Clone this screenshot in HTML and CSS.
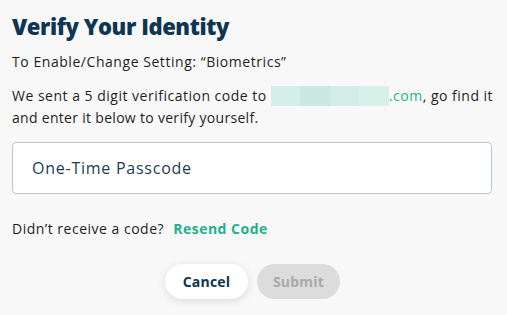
FILE: index.html
```html
<!DOCTYPE html>
<html>
<head>
<meta charset="utf-8">
<link rel="stylesheet" href="styles.css">
</head>
<body>
<div class="dialog">
  <h1 class="title">Verify Your Identity</h1>
  <p class="setting">To Enable/Change Setting: “Biometrics”</p>
  <p class="msg"><span class="line">We sent a 5 digit verification code to <span class="blur"><i class="b1"></i><i class="b2"></i><i class="b3"></i><i class="b4"></i></span><span class="teal">.com</span>, go find it</span><br><span class="line2">and enter it below to verify yourself.</span></p>
  <div class="field"><span class="placeholder">One-Time Passcode</span></div>
  <p class="resend">Didn’t receive a code? <a class="resend-link">Resend Code</a></p>
  <div class="actions">
    <button class="btn cancel">Cancel</button>
    <button class="btn submit">Submit</button>
  </div>
</div>
</body>
</html>
```
FILE: styles.css
```css
html, body { margin: 0; padding: 0; }
body {
  background: #f8f8f8;
  font-family: "Open Sans", "DejaVu Sans", sans-serif;
  color: #1f1f1f;
  width: 507px;
  height: 315px;
  overflow: hidden;
}
.dialog { padding: 12px 15px 0 12px; }
.title {
  margin: 0;
  font-size: 22px;
  font-weight: 800;
  color: #0e3551;
  line-height: 28px;
  letter-spacing: -0.4px;
}
.setting {
  margin: 12px 0 0;
  font-size: 14px;
  line-height: 20px;
  letter-spacing: 0.55px;
}
.msg {
  margin: 13px 0 0;
  font-size: 14px;
  line-height: 22px;
  letter-spacing: 0.5px;
}
.line { white-space: nowrap; }
.line2 { letter-spacing: 0.3px; }
.blur {
  display: inline-flex;
  vertical-align: -5px;
  width: 118px;
  height: 20px;
}
.blur i { flex: 1; display: block; }
.b1 { background: #d6eee9; }
.b2 { background: #cbe9e3; }
.b3 { background: #d3ece7; }
.b4 { background: #d9efea; }
.teal { color: #1fb08f; }
.field {
  margin-top: 13px;
  height: 50px;
  border: 1px solid #b9c9d4;
  border-radius: 4px;
  background: #fff;
  display: flex;
  align-items: center;
  padding-left: 19px;
}
.placeholder { font-size: 16px; color: #1b3d54; letter-spacing: 0.75px; }
.resend {
  margin: 25px 0 0;
  font-size: 14px;
  line-height: 20px;
  letter-spacing: 0.5px;
}
.resend-link { color: #1fb08f; font-weight: 700; margin-left: 5px; }
.actions {
  display: flex;
  justify-content: center;
  gap: 9px;
  margin-top: 25px;
  padding-left: 1px;
}
.btn {
  font-family: inherit;
  font-size: 14px;
  font-weight: 700;
  border: none;
  border-radius: 18px;
  height: 35px;
  width: 83px;
  padding: 0;
  letter-spacing: 0.2px;
}
.cancel {
  background: #fff;
  color: #0e3551;
  box-shadow: 0 2px 8px rgba(0,0,0,0.12);
}
.submit { background: #dcdcdc; color: #a9a9a9; }
```
